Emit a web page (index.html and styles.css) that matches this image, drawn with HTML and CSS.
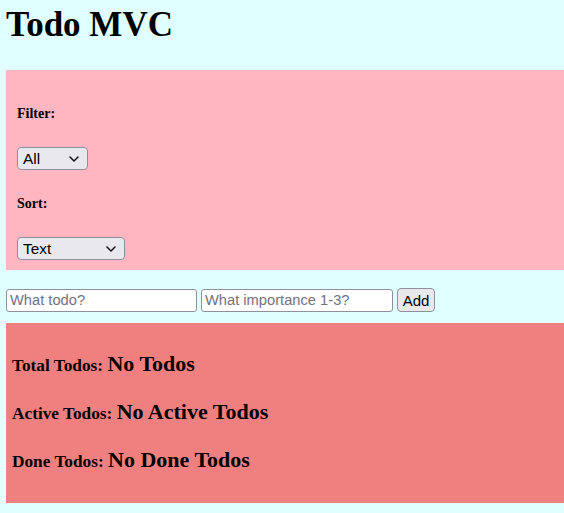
FILE: index.html
```html
<!DOCTYPE html>
<html lang="en">
<head>
<meta charset="utf-8">
<title>Todo MVC</title>
<link rel="stylesheet" href="styles.css">
</head>
<body>
  <h1 class="title">Todo MVC</h1>
  <section class="controls">
    <h5 class="label">Filter:</h5>
    <div class="select-wrap filter-select">
      <select class="select">
        <option>All</option>
        <option>Active</option>
        <option>Done</option>
      </select>
      <svg class="chevron" width="10" height="6" viewBox="0 0 10 6"><path d="M1 1 L5 5 L9 1" fill="none" stroke="#111" stroke-width="1.5" stroke-linecap="round" stroke-linejoin="round"/></svg>
    </div>
    <h5 class="label">Sort:</h5>
    <div class="select-wrap sort-select">
      <select class="select">
        <option>Text</option>
        <option>Importance</option>
      </select>
      <svg class="chevron" width="10" height="6" viewBox="0 0 10 6"><path d="M1 1 L5 5 L9 1" fill="none" stroke="#111" stroke-width="1.5" stroke-linecap="round" stroke-linejoin="round"/></svg>
    </div>
  </section>
  <form class="add-row">
    <input class="field field-todo" type="text" placeholder="What todo?">
    <input class="field field-imp" type="text" placeholder="What importance 1-3?">
    <button class="btn" type="button">Add</button>
  </form>
  <section class="stats">
    <h4 class="stat">Total Todos: <span class="stat-value">No Todos</span></h4>
    <h4 class="stat">Active Todos: <span class="stat-value">No Active Todos</span></h4>
    <h4 class="stat">Done Todos: <span class="stat-value">No Done Todos</span></h4>
  </section>
</body>
</html>
```
FILE: styles.css
```css
html, body {
  background: #e0ffff;
}
body {
  margin: 0;
  padding: 0 0 12px 6px;
  font-family: "Liberation Serif", "Times New Roman", serif;
  color: #000;
}
.title {
  margin: 6px 0 26px;
  font-size: 35px;
  font-weight: bold;
  line-height: 38px;
}
.controls {
  background: #ffb6c1;
  padding: 36px 0 10px 11px;
}
.label {
  margin: 0 0 25px;
  font-size: 14px;
  font-weight: bold;
  line-height: normal;
}
.select-wrap {
  position: relative;
  height: 23px;
  margin-bottom: 26px;
}
.select-wrap:last-child {
  margin-bottom: 0;
}
.filter-select { width: 71px; }
.sort-select { width: 108px; }
.select {
  appearance: none;
  -webkit-appearance: none;
  box-sizing: border-box;
  width: 100%;
  height: 23px;
  margin: 0;
  padding: 0 0 0 5px;
  background: #e9e9ed;
  border: 1px solid #8f8f9d;
  border-radius: 4px;
  font-family: "Liberation Sans", Arial, sans-serif;
  font-size: 15.4px;
  color: #000;
}
.chevron {
  position: absolute;
  right: 9px;
  top: 9px;
  pointer-events: none;
}
.add-row {
  display: flex;
  align-items: center;
  margin: 18px 0 11px;
  height: 24px;
}
.field {
  box-sizing: border-box;
  height: 23px;
  margin: 0;
  padding: 0 3px;
  background: #fff;
  border: 1px solid #8f8f9d;
  border-radius: 3px;
  font-family: "Liberation Sans", Arial, sans-serif;
  font-size: 14.7px;
  color: #000;
}
.field::placeholder {
  color: #737380;
}
.field-todo {
  width: 191px;
  margin-right: 4px;
}
.field-imp {
  width: 192px;
  margin-right: 4px;
}
.btn {
  box-sizing: border-box;
  height: 24px;
  width: 38px;
  margin: 0;
  padding: 0;
  background: #e9e9ed;
  border: 1px solid #8f8f9d;
  border-radius: 4px;
  font-family: "Liberation Sans", Arial, sans-serif;
  font-size: 15px;
  color: #000;
}
.stats {
  background: #f08080;
  padding: 28px 0 29px 6px;
}
.stat {
  margin: 0 0 21px;
  font-size: 17.3px;
  font-weight: bold;
  line-height: 25px;
}
.stat:last-child {
  margin-bottom: 0;
}
.stat-value {
  font-size: 22px;
}
```
